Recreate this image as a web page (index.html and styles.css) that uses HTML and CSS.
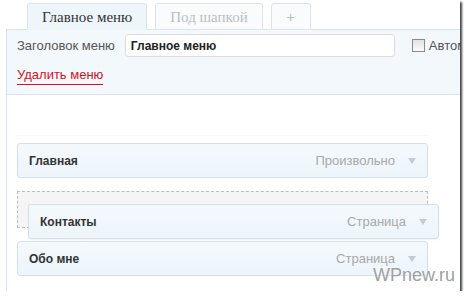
FILE: index.html
```html
<!DOCTYPE html>
<html lang="ru">

<head>
    <meta charset="UTF-8">
    <title>Меню</title>
    <link rel="stylesheet" href="styles.css">
</head>

<body>
    <div class="shot">
        <div class="tabs">
            <div class="tab tab-active">Главное меню</div>
            <div class="tab">Под шапкой</div>
            <div class="tab tab-add">+</div>
        </div>

        <div class="panel">
            <div class="panel-head">
                <div class="head-row">
                    <label class="field-label" for="menuName">Заголовок меню</label>
                    <input class="field-input" id="menuName" type="text" value="Главное меню">
                    <label class="auto-add">
                        <span class="checkbox"></span>
                        <span class="auto-text">Автоматически</span>
                    </label>
                </div>
                <a class="delete-link" href="#">Удалить меню</a>
            </div>

            <div class="panel-body">
                <div class="menu-list">
                    <div class="menu-item">
                        <span class="item-title">Главная</span>
                        <span class="item-type">Произвольно</span>
                        <span class="item-arrow"></span>
                    </div>
                    <div class="menu-placeholder"></div>
                    <div class="menu-item">
                        <span class="item-title">Обо мне</span>
                        <span class="item-type">Страница</span>
                        <span class="item-arrow"></span>
                    </div>

                    <!-- item being dragged -->
                    <div class="menu-item menu-item-drag">
                        <span class="item-title">Контакты</span>
                        <span class="item-type">Страница</span>
                        <span class="item-arrow"></span>
                    </div>
                </div>
            </div>
        </div>

        <div class="watermark">WPnew.ru</div>
    </div>
</body>

</html>
```

FILE: styles.css
```css
body,
html {
    margin: 0;
    padding: 0;
    background-color: white;
    font-family: 'Liberation Sans', Arial, sans-serif;
}

.shot {
    position: relative;
    width: 460px;
    height: 291px;
    overflow: hidden;
    background-color: white;
    box-shadow: 2px 2px 2px rgba(0, 0, 0, 0.75);
    padding-top: 3px;
    box-sizing: border-box;
}

/* tabs */

.tabs {
    display: flex;
    gap: 8px;
    padding-left: 27px;
    margin-bottom: -1px;
    position: relative;
    z-index: 1;
}

.tab {
    height: 25px;
    line-height: 26px;
    padding: 0 14px;
    border: 1px solid #dbe4eb;
    border-radius: 3px 3px 0 0;
    background-color: #f9fbfd;
    font-family: 'Liberation Serif', 'Times New Roman', serif;
    font-size: 15px;
    color: #b9bec2;
}

.tab-active {
    background-color: #eef6fc;
    border-bottom-color: #eef6fc;
    color: #333;
}

.tab-add {
    width: 10px;
    text-align: center;
    font-family: 'Liberation Sans', Arial, sans-serif;
    font-size: 14px;
}

/* panel */

.panel {
    margin-left: 6px;
    width: 520px;
    border-left: 1px solid #d6e0e8;
    border-top: 1px solid #dbe4eb;
    height: 300px;
}

.panel-head {
    background-color: #f3f8fc;
    border-bottom: 1px solid #dbe4eb;
    padding: 4px 10px 9px;
}

.head-row {
    display: flex;
    align-items: center;
    white-space: nowrap;
}

.field-label {
    flex-shrink: 0;
    font-size: 13px;
    color: #555;
}

.field-input {
    flex-shrink: 0;
    margin: 0 0 0 10px;
    width: 270px;
    height: 23px;
    box-sizing: border-box;
    border: 1px solid #dcdcdc;
    border-radius: 3px;
    padding: 0 5px;
    font-family: 'Liberation Sans', Arial, sans-serif;
    font-size: 12px;
    font-weight: bold;
    color: #222;
    background-color: white;
}

.auto-add {
    flex-shrink: 0;
    margin-left: 17px;
    display: flex;
    align-items: center;
    gap: 4px;
    font-size: 13px;
    color: #555;
}

.checkbox {
    width: 11px;
    height: 11px;
    border: 1px solid #8a8a8a;
    background: linear-gradient(#e2e2e2, #fbfbfb);
}

.delete-link {
    display: inline-block;
    margin-top: 10px;
    padding-bottom: 1px;
    font-size: 13px;
    line-height: 16px;
    color: #d0141e;
    text-decoration: none;
    border-bottom: 1px solid #d0141e;
}

.panel-body {
    padding: 40px 10px 0;
}

.menu-list {
    position: relative;
    width: 411px;
    border-top: 1px solid #f7f8f9;
    padding-top: 7px;
}

.menu-item {
    display: flex;
    align-items: center;
    height: 33px;
    padding: 0 11px;
    border: 1px solid #d3e0ea;
    border-radius: 3px;
    background: linear-gradient(#f4f9fd, #edf5fb);
}

.item-title {
    flex: 1;
    font-size: 12px;
    font-weight: bold;
    color: #333;
}

.item-type {
    font-size: 13px;
    color: #a8a8a8;
}

.item-arrow {
    margin-left: 13px;
    margin-top: 1px;
    width: 0;
    height: 0;
    border-left: 4px solid transparent;
    border-right: 4px solid transparent;
    border-top: 6px solid #c3ccd4;
}

.menu-placeholder {
    height: 35px;
    margin: 13px 0;
    border: 1px dashed #bdbdbd;
    background-color: #f5f5f5;
}

.menu-item-drag {
    position: absolute;
    left: 11px;
    top: 68px;
    width: 387px;
    box-shadow: 0 1px 2px rgba(0, 0, 0, 0.06);
}

.watermark {
    position: absolute;
    right: 5px;
    bottom: 7px;
    font-size: 18px;
    line-height: 18px;
    color: #a0a0a0;
    text-shadow: 0 0 2px white;
}
```
